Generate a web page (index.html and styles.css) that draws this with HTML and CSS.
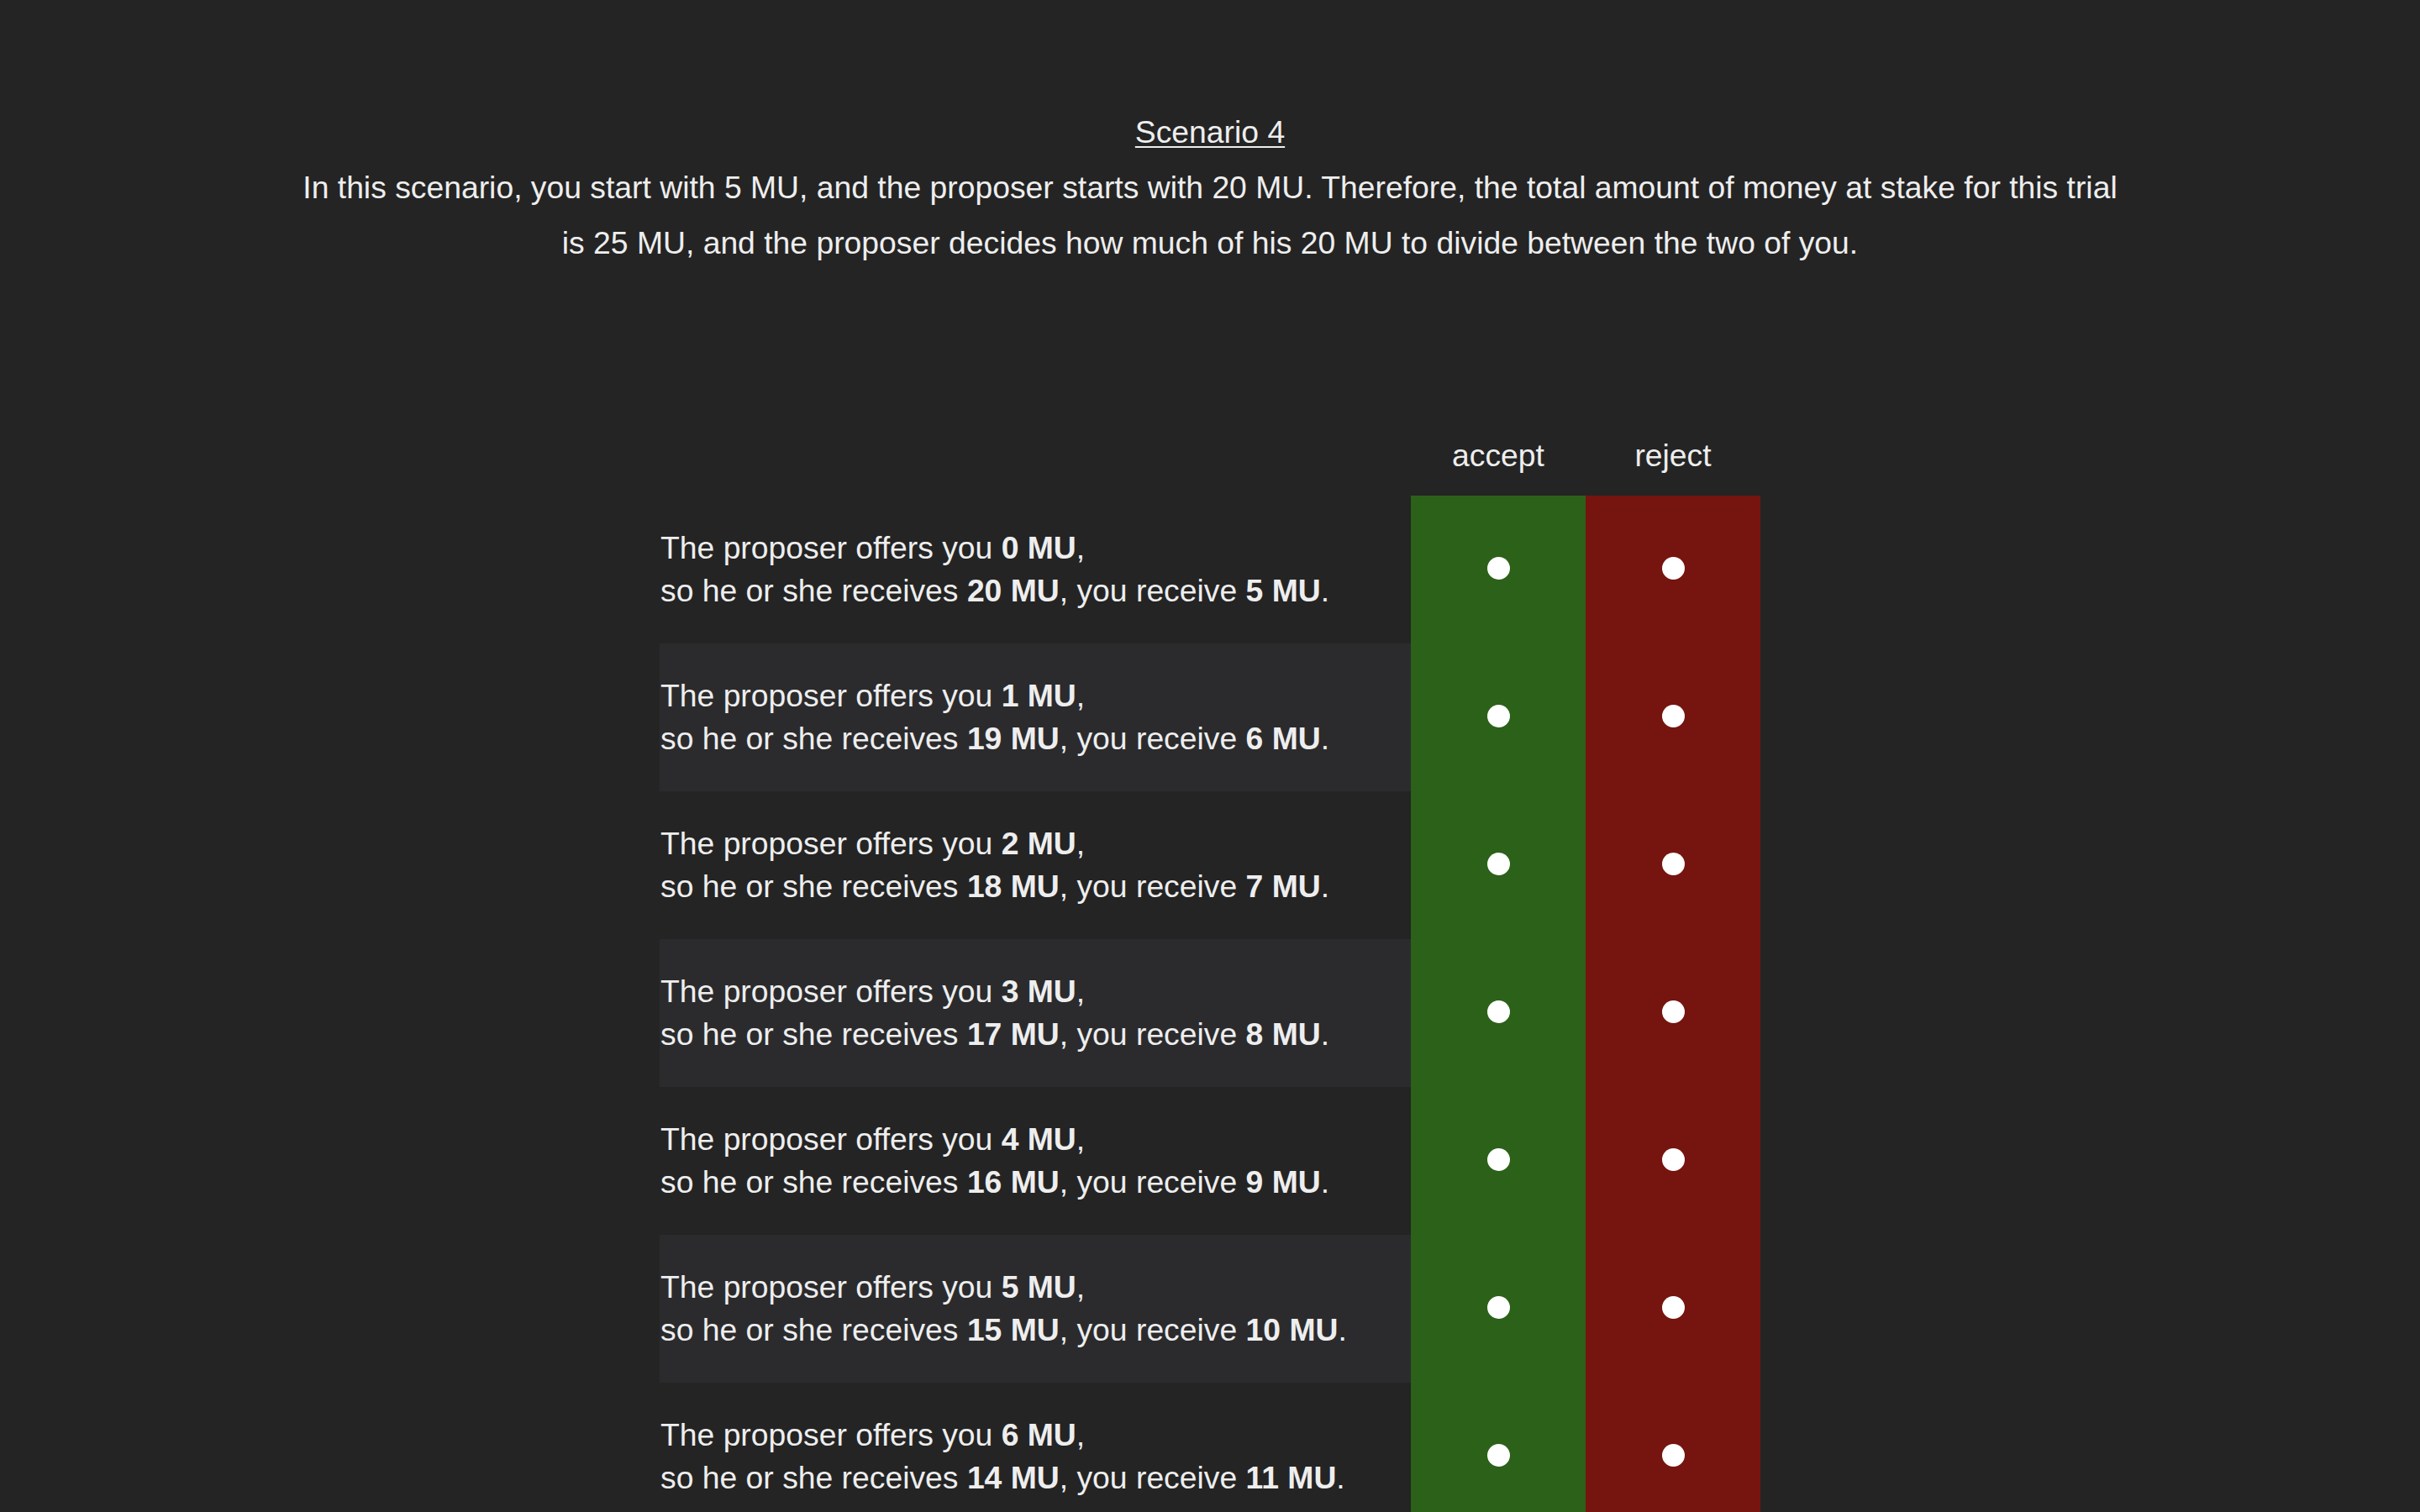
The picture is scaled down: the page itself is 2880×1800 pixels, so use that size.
FILE: index.html
```html
<!DOCTYPE html>
<html lang="en">
<head>
<meta charset="utf-8">
<title>Scenario 4</title>
<link rel="stylesheet" href="styles.css">
</head>
<body>
<main class="page">
  <header class="intro">
    <h1 class="title">Scenario 4</h1>
    <p class="desc">In this scenario, you start with 5 MU, and the proposer starts with 20 MU. Therefore, the total amount of money at stake for this trial is 25 MU, and the proposer decides how much of his 20 MU to divide between the two of you.</p>
  </header>
  <form class="choices">
    <div class="head-row"><div></div><div class="col-label">accept</div><div class="col-label">reject</div></div>
    <div class="row"><div class="label"><span>The proposer offers you <b>0 MU</b>,<br>so he or she receives <b>20 MU</b>, you receive <b>5 MU</b>.</span></div><div class="cell accept"><input class="radio" type="radio" name="o0"></div><div class="cell reject"><input class="radio" type="radio" name="o0"></div></div>
    <div class="row"><div class="label"><span>The proposer offers you <b>1 MU</b>,<br>so he or she receives <b>19 MU</b>, you receive <b>6 MU</b>.</span></div><div class="cell accept"><input class="radio" type="radio" name="o1"></div><div class="cell reject"><input class="radio" type="radio" name="o1"></div></div>
    <div class="row"><div class="label"><span>The proposer offers you <b>2 MU</b>,<br>so he or she receives <b>18 MU</b>, you receive <b>7 MU</b>.</span></div><div class="cell accept"><input class="radio" type="radio" name="o2"></div><div class="cell reject"><input class="radio" type="radio" name="o2"></div></div>
    <div class="row"><div class="label"><span>The proposer offers you <b>3 MU</b>,<br>so he or she receives <b>17 MU</b>, you receive <b>8 MU</b>.</span></div><div class="cell accept"><input class="radio" type="radio" name="o3"></div><div class="cell reject"><input class="radio" type="radio" name="o3"></div></div>
    <div class="row"><div class="label"><span>The proposer offers you <b>4 MU</b>,<br>so he or she receives <b>16 MU</b>, you receive <b>9 MU</b>.</span></div><div class="cell accept"><input class="radio" type="radio" name="o4"></div><div class="cell reject"><input class="radio" type="radio" name="o4"></div></div>
    <div class="row"><div class="label"><span>The proposer offers you <b>5 MU</b>,<br>so he or she receives <b>15 MU</b>, you receive <b>10 MU</b>.</span></div><div class="cell accept"><input class="radio" type="radio" name="o5"></div><div class="cell reject"><input class="radio" type="radio" name="o5"></div></div>
    <div class="row"><div class="label"><span>The proposer offers you <b>6 MU</b>,<br>so he or she receives <b>14 MU</b>, you receive <b>11 MU</b>.</span></div><div class="cell accept"><input class="radio" type="radio" name="o6"></div><div class="cell reject"><input class="radio" type="radio" name="o6"></div></div>
    <div class="row"><div class="label"><span>The proposer offers you <b>7 MU</b>,<br>so he or she receives <b>13 MU</b>, you receive <b>12 MU</b>.</span></div><div class="cell accept"><input class="radio" type="radio" name="o7"></div><div class="cell reject"><input class="radio" type="radio" name="o7"></div></div>
    <div class="row"><div class="label"><span>The proposer offers you <b>8 MU</b>,<br>so he or she receives <b>12 MU</b>, you receive <b>13 MU</b>.</span></div><div class="cell accept"><input class="radio" type="radio" name="o8"></div><div class="cell reject"><input class="radio" type="radio" name="o8"></div></div>
    <div class="row"><div class="label"><span>The proposer offers you <b>9 MU</b>,<br>so he or she receives <b>11 MU</b>, you receive <b>14 MU</b>.</span></div><div class="cell accept"><input class="radio" type="radio" name="o9"></div><div class="cell reject"><input class="radio" type="radio" name="o9"></div></div>
    <div class="row"><div class="label"><span>The proposer offers you <b>10 MU</b>,<br>so he or she receives <b>10 MU</b>, you receive <b>15 MU</b>.</span></div><div class="cell accept"><input class="radio" type="radio" name="o10"></div><div class="cell reject"><input class="radio" type="radio" name="o10"></div></div>
  </form>
</main>
</body>
</html>
```
FILE: styles.css
```css
html, body {
  margin: 0;
  padding: 0;
  background: #242424;
}

body {
  color: #eeeeee;
  font-family: "Liberation Sans", Helvetica, Arial, sans-serif;
  font-size: 37.3px;
}

.page {
  padding-top: 124px;
}

.intro {
  max-width: 2178px;
  margin: 0 auto;
  text-align: center;
  line-height: 66px;
}

.title {
  margin: 0;
  font-size: 37.3px;
  font-weight: normal;
  text-decoration: underline;
  text-decoration-thickness: 2px;
  text-underline-offset: 4px;
}

.desc {
  margin: 0;
}

.choices {
  width: 1310px;
  margin: 195px auto 0;
}

.head-row,
.row {
  display: grid;
  grid-template-columns: 894px 208px 208px;
}

.head-row {
  height: 73px;
  line-height: 51px;
}

.col-label {
  text-align: center;
}

.row {
  height: 176px;
}

.row:nth-child(odd) .label {
  background: #2b2b2d;
}

.label {
  display: flex;
  align-items: center;
  line-height: 51px;
  padding-left: 1px;
}

.label b {
  font-weight: bold;
}

.cell {
  display: flex;
  align-items: center;
  justify-content: center;
}

.accept {
  background: #2c6119;
}

.reject {
  background: #76140f;
}

.radio {
  appearance: none;
  -webkit-appearance: none;
  width: 27px;
  height: 27px;
  margin: 0 0 4px;
  border-radius: 50%;
  background: #ffffff;
  border: none;
}
```
